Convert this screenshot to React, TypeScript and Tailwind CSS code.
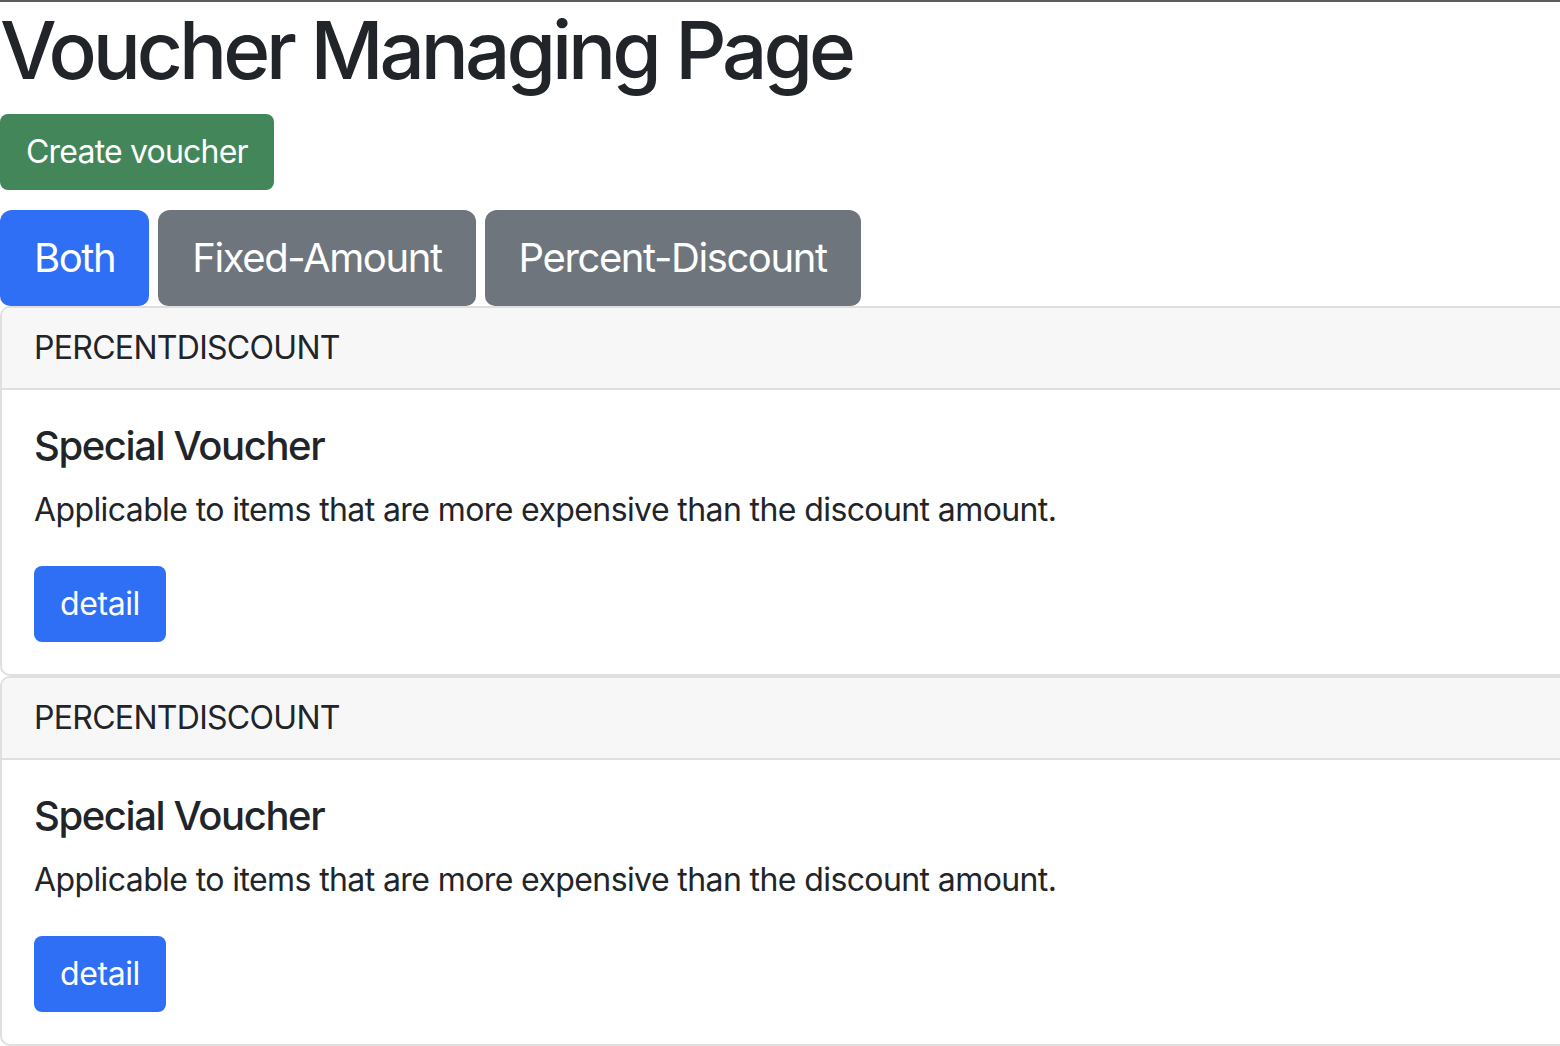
const vouchers = [
  {
    type: "PERCENTDISCOUNT",
    title: "Special Voucher",
    text: "Applicable to items that are more expensive than the discount amount.",
  },
  {
    type: "PERCENTDISCOUNT",
    title: "Special Voucher",
    text: "Applicable to items that are more expensive than the discount amount.",
  },
];

const tabs = ["Both", "Fixed-Amount", "Percent-Discount"];

function VoucherCard({ type, title, text }: { type: string; title: string; text: string }) {
  return (
    <div className="w-[1600px] border-2 border-[#dfdfdf] rounded-[10px] bg-white">
      {/* Header */}
      <div className="bg-[#f7f7f7] border-b-2 border-[#dfdfdf] px-[32px] py-[16px] text-[32px] leading-[48px] tracking-[-0.7px] rounded-t-[8px]">
        {type}
      </div>

      {/* Body */}
      <div className="p-[32px]">
        <h5 className="text-[40px] leading-[48px] font-medium tracking-[-1.4px] mb-[16px]">{title}</h5>
        <p className="text-[32px] leading-[48px] tracking-[-0.6px] mb-[32px]">{text}</p>
        <button className="bg-[#2f6ff5] text-white text-[32px] leading-[48px] tracking-[-0.4px] px-[26px] py-[14px] rounded-[8px]">
          detail
        </button>
      </div>
    </div>
  );
}

export default function App() {
  return (
    <div
      className="min-h-screen w-full overflow-hidden bg-white text-[#212529] border-t-2 border-[#5c5c5c]"
      style={{ fontFamily: "Inter, 'Noto Sans', sans-serif" }}
    >
      <h1 className="text-[80px] leading-[96px] font-medium tracking-[-4px] mb-[16px]">Voucher Managing Page</h1>

      <button className="bg-[#43865a] text-white text-[32px] leading-[48px] tracking-[-0.8px] px-[26px] py-[14px] rounded-[8px]">
        Create voucher
      </button>

      {/* Filter tabs */}
      <div className="flex gap-[9px] mt-[20px]">
        {tabs.map((tab, index) => (
          <button
            key={tab}
            className={
              (index === 0 ? "bg-[#2f6ff5]" : "bg-[#6e757c]") +
              " text-white text-[40px] leading-[60px] tracking-[-1.4px] px-[34px] py-[18px] rounded-[12px] rounded-b-[10px]"
            }
          >
            {tab}
          </button>
        ))}
      </div>

      {vouchers.map((v, i) => (
        <VoucherCard key={i} {...v} />
      ))}
    </div>
  );
}
